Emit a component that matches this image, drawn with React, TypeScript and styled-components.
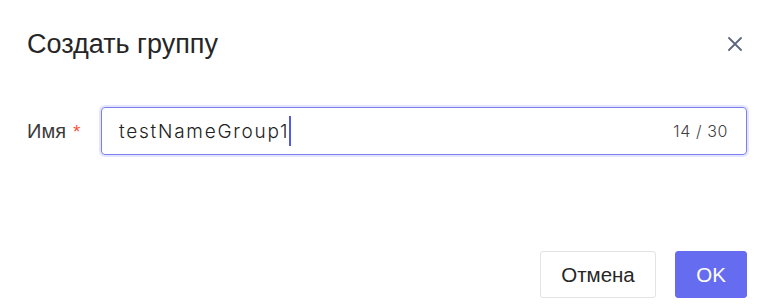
import React from 'react';
import styled, { createGlobalStyle } from 'styled-components';

const GlobalStyle = createGlobalStyle`
  html, body {
    margin: 0;
    padding: 0;
    background: #ffffff;
  }
  body {
    font-family: 'Liberation Sans', Arial, sans-serif;
    color: #262626;
  }
`;

const Dialog = styled.div`
  width: 772px;
  height: 308px;
  box-sizing: border-box;
  padding: 0 25px 0 27px;
  display: flex;
  flex-direction: column;
  background: #ffffff;
`;

const Header = styled.div`
  height: 88px;
  display: flex;
  align-items: center;
  justify-content: space-between;
`;

const Title = styled.h2`
  margin: 0;
  font-size: 27px;
  font-weight: 400;
  color: #262626;
`;

const CloseButton = styled.button`
  width: 24px;
  height: 24px;
  padding: 0;
  border: none;
  background: transparent;
  display: flex;
  align-items: center;
  justify-content: center;
  cursor: pointer;
  color: #5c677d;
`;

const FieldRow = styled.div`
  margin-top: 19px;
  display: flex;
  align-items: center;
`;

const Label = styled.label`
  width: 74px;
  flex-shrink: 0;
  font-size: 20px;
  color: #3a3a3a;
`;

const Required = styled.span`
  margin-left: 7px;
  color: #f5533d;
  font-size: 19px;
`;

const InputBox = styled.div`
  flex: 1;
  height: 48px;
  box-sizing: border-box;
  display: flex;
  align-items: center;
  padding: 0 18px 0 17px;
  border: 1px solid #7c80ef;
  border-radius: 4px;
  box-shadow: 0 0 0 2px rgba(104, 110, 240, 0.18);
  font-family: 'Inter', 'Open Sans', sans-serif;
`;

const Value = styled.span`
  font-size: 19px;
  font-weight: 300;
  color: #222222;
  letter-spacing: 1.75px;
`;

const Caret = styled.span`
  display: inline-block;
  width: 2px;
  height: 30px;
  background: #5458e6;
`;

const Counter = styled.span`
  margin-left: auto;
  font-size: 16px;
  font-weight: 300;
  color: #3f3f3f;
  letter-spacing: 0.6px;
`;

const Footer = styled.div`
  margin-top: auto;
  margin-bottom: 10px;
  display: flex;
  justify-content: flex-end;
  gap: 19px;
`;

const Button = styled.button<{ $primary?: boolean }>`
  height: 47px;
  box-sizing: border-box;
  padding: 0;
  width: ${(p) => (p.$primary ? '72px' : '116px')};
  border-radius: 3px;
  border: 1px solid ${(p) => (p.$primary ? '#666cf0' : '#e3e3e3')};
  background: ${(p) => (p.$primary ? '#666cf0' : '#ffffff')};
  color: ${(p) => (p.$primary ? '#ffffff' : '#262626')};
  font-family: 'Liberation Sans', Arial, sans-serif;
  font-size: 20.5px;
  cursor: pointer;
`;

const CloseIcon = () => (
  <svg width="14" height="14" viewBox="0 0 14 14" fill="none">
    <path d="M1 1L13 13M13 1L1 13" stroke="currentColor" strokeWidth="1.8" strokeLinecap="round" />
  </svg>
);

export default function App() {
  const value = 'testNameGroup1';
  return (
    <>
      <GlobalStyle />
      <Dialog>
        <Header>
          <Title>Создать группу</Title>
          <CloseButton aria-label="close">
            <CloseIcon />
          </CloseButton>
        </Header>
        <FieldRow>
          <Label>
            Имя<Required>*</Required>
          </Label>
          <InputBox>
            <Value>{value}</Value>
            <Caret />
            <Counter>{value.length} / 30</Counter>
          </InputBox>
        </FieldRow>
        <Footer>
          <Button>Отмена</Button>
          <Button $primary>OK</Button>
        </Footer>
      </Dialog>
    </>
  );
}
